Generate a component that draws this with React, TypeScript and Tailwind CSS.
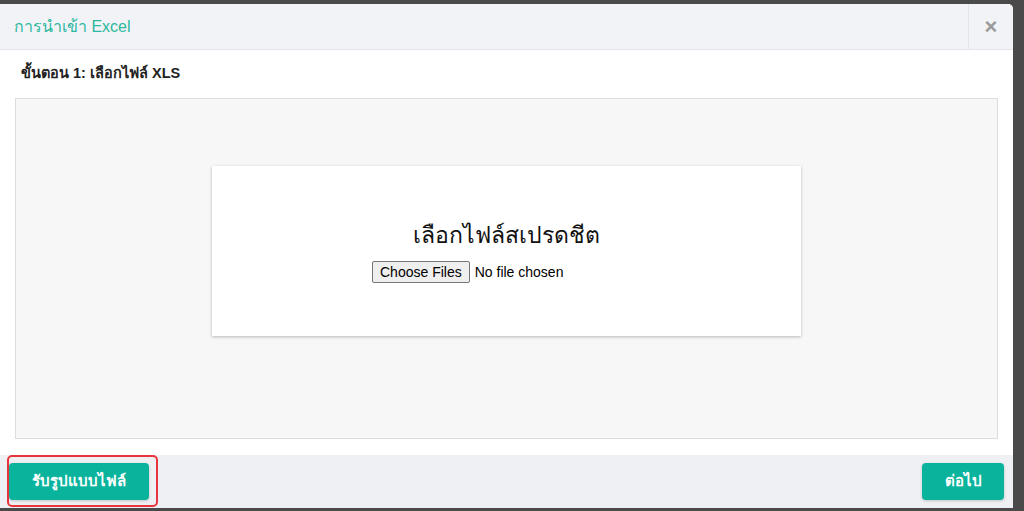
import React from 'react';

const StepImport: React.FC = () => {
  return (
    <div className="w-[1024px] h-[511px] bg-[#4a4a4a] pt-[4px] font-['Liberation_Sans','Noto_Sans',sans-serif] overflow-hidden">
      <div className="w-[1013px] h-[504px] bg-white rounded-tr-[5px] flex flex-col overflow-hidden">
        {/* Header */}
        <div className="h-[46px] shrink-0 flex items-stretch bg-[#f2f3f7] border-b border-[#e2e5ea]">
          <h4 className="flex-1 flex items-center pl-[14px] text-[16px] text-[#2cb89e]">การนำเข้า Excel</h4>
          <button
            type="button"
            className="w-[45px] flex items-center justify-center border-l border-[#e2e5ea] text-[#9a9a9a] text-[22px] font-bold leading-none"
          >
            ×
          </button>
        </div>

        {/* Body */}
        <div className="h-[405px] shrink-0 px-[15px] pt-[13px] flex flex-col">
          <div className="pl-[6px] text-[14.5px] font-bold text-[#222] h-[20px] leading-[20px]">ขั้นตอน 1: เลือกไฟล์ XLS</div>
          <div className="mt-[15px] w-[983px] h-[341px] bg-[#f7f7f7] border border-[#dddddd] flex justify-center pt-[67px]">
            <div className="w-[589px] h-[170px] bg-white shadow-[0_1px_3px_rgba(0,0,0,0.25)] flex flex-col items-center pt-[54px]">
              <div className="text-[23px] text-[#111] leading-[30px]">เลือกไฟล์สเปรดชีต</div>
              <input
                type="file"
                multiple
                className="self-start ml-[160px] mt-[11px] w-[200px] text-[14px] text-black file:mr-[5px] file:h-[22px] file:px-[7px] file:bg-[#efefef] file:border file:border-solid file:border-[#767676] file:rounded-[2px] file:text-[14px] file:text-black"
              />
            </div>
          </div>
        </div>

        {/* Footer */}
        <div className="h-[53px] shrink-0 bg-[#eef0f3] flex items-center justify-between pl-[9px] pr-[9px]">
          <div className="relative">
            <div className="absolute -left-[2px] -top-[8px] w-[151px] h-[52px] rounded-[5px] border-2 border-[#e8343c] pointer-events-none" />
            <button
              type="button"
              className="w-[140px] h-[37px] rounded-[4px] bg-[#0ab39c] text-white text-[15px] font-bold shadow-[0_1px_3px_rgba(0,0,0,0.2)]"
            >
              รับรูปแบบไฟล์
            </button>
          </div>
          <button
            type="button"
            className="w-[82px] h-[37px] rounded-[4px] bg-[#0ab39c] text-white text-[15px] font-bold shadow-[0_1px_3px_rgba(0,0,0,0.2)]"
          >
            ต่อไป
          </button>
        </div>
      </div>
    </div>
  );
};

export default function App() {
  return <StepImport />;
}
